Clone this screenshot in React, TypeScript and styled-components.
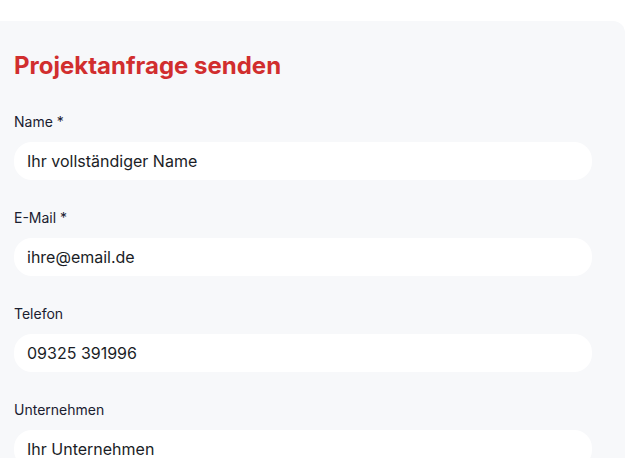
import React from 'react';
import styled, { createGlobalStyle } from 'styled-components';

const GlobalStyle = createGlobalStyle`
    html, body {
        margin: 0;
        padding: 0;
        background: #ffffff;
        overflow: hidden;
    }
    * {
        box-sizing: border-box;
    }
`

const Page = styled.div`
    width: 625px;
    height: 458px;
    padding-top: 21px;
    font-family: Inter, "Noto Sans", sans-serif;
    overflow: hidden;
`

const Card = styled.form`
    background: #f7f8fa;
    border-top-right-radius: 12px;
    padding: 29px 33px 24px 14px;
    width: 625px;
`

const Title = styled.h2`
    margin: 0 0 30px;
    font-size: 24px;
    line-height: 32px;
    font-weight: 700;
    color: #d12e2e;
`

const Field = styled.div`
    display: flex;
    flex-direction: column;
    gap: 10px;
    margin-bottom: 28px;
`

const Label = styled.label`
    font-size: 14px;
    line-height: 20px;
    font-weight: 400;
    color: #1a2030;
`

const Input = styled.input`
    height: 38px;
    width: 100%;
    border: none;
    border-radius: 18px;
    background: #ffffff;
    padding: 0 13px;
    font-family: Inter, "Noto Sans", sans-serif;
    font-size: 16px;
    color: #1a1d26;
    outline: none;

    &::placeholder {
        color: #1a1d26;
        opacity: 1;
    }
`

interface FieldProps {
    label: string;
    placeholder: string;
    type?: string;
}

const fields: FieldProps[] = [
    { label: 'Name *', placeholder: 'Ihr vollständiger Name' },
    { label: 'E-Mail *', placeholder: 'ihre@email.de', type: 'email' },
    { label: 'Telefon', placeholder: '09325 391996', type: 'tel' },
    { label: 'Unternehmen', placeholder: 'Ihr Unternehmen' },
];

const FormField = ({ label, placeholder, type = 'text' }: FieldProps) => (
    <Field>
        <Label>{label}</Label>
        <Input type={type} placeholder={placeholder} />
    </Field>
);

const App = () => {
    return (
        <Page>
            <GlobalStyle />
            <Card onSubmit={(e) => e.preventDefault()}>
                <Title>Projektanfrage senden</Title>
                { fields.map((f) => <FormField key={f.label} {...f} />) }
            </Card>
        </Page>
    );
};

export default App;
